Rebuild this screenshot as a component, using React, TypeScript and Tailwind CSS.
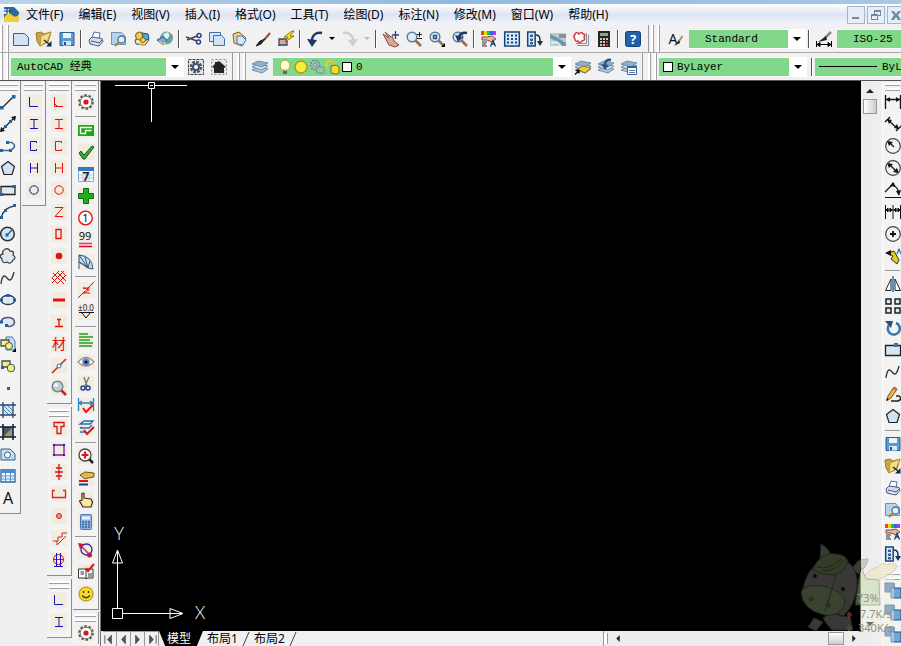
import type { ReactNode } from 'react';

const doc = <path d="M.5 2.500h11l4 4v8H.5z" fill="#cfe3f5" stroke="#35608c" />;

const folder = (
  <>
    <path d="M0 2l5-1 3 2 7-2-3 10-8 4-3-5z" fill="#c9a53f" stroke="#9a7a2c" />
    <path d="M5 5l10-4-4 10-7 4z" fill="#f6dc83" stroke="#b9993c" />
    <path d="M8 9l5 4" stroke="#12284f" strokeWidth="1.600" />
    <path d="M15.500 10v5.500H10z" fill="#12284f" />
  </>
);

const disk = (
  <>
    <path d="M1 1.500h14v13H1z" fill="#5b9bd2" stroke="#2b5f94" />
    <path d="M4 2h8v5H4z" fill="#eaf4fb" />
    <path d="M4 10h8v4.500H4z" fill="#d8e8f3" />
    <path d="M5 11h2v3H5z" fill="#24517f" />
  </>
);

const printer = (
  <>
    <path d="M4 7l2-6 6 1-1 6" fill="#fff" stroke="#5b6c9e" />
    <path d="M1 9l3-3 10 1.500 1 3-4 4.500-9-2z" fill="#d5d9ec" stroke="#4a5688" />
    <path d="M3 10l8 2 3-3" stroke="#4a5688" />
    <path d="M5 12l5 1.500" stroke="#fff" />
  </>
);

const preview = (
  <>
    <path d="M.5 1.500h10l4 4v8H.5z" fill="#b5d3ea" stroke="#6f94b6" />
    <circle cx="10.500" cy="8.500" r="3.500" fill="#e3f2fa" stroke="#4e7390" strokeWidth="1.300" />
    <path d="M8 11l-4 4" stroke="#a87b3c" strokeWidth="2" />
  </>
);

const props = (
  <>
    <path d="M0 2h4" stroke="#f33" strokeWidth="4" />
    <path d="M3 2h3" stroke="#e3e000" strokeWidth="4" />
    <path d="M6 2h3" stroke="#1c2" strokeWidth="4" />
    <path d="M9 2h3" stroke="#26f" strokeWidth="4" />
    <path d="M12 2h3" stroke="#d2d" strokeWidth="4" />
    <path d="M1 6h5l5-1 4 3-4 3-5-2H1z" fill="#eab79c" stroke="#7c4e42" />
    <path d="M1 11h5M1 13h4M1 15h5" stroke="#333" />
    <path d="M9.500 15.500l2.500-6 2.500 6M10.500 13h3.500" stroke="#1c3c74" strokeWidth="1.300" />
  </>
);

const toolPalette = (
  <>
    <path d="M.7 1h7.500v14H.7z" fill="#d8e8f5" stroke="#17467c" strokeWidth="1.500" />
    <path d="M3.500 4h2v1.500h-2zM3.500 8h2v1.500h-2zM3.500 11.500h2V13h-2z" stroke="#17467c" />
    <path d="M9 4c4 0 4 3 4 7" stroke="#17315a" strokeWidth="1.500" />
    <path d="M10 10h6l-3 5z" fill="#17315a" />
  </>
);

const polygon = <path d="M8 1.500l6.500 5-2.500 8H4l-2.500-8z" fill="#d3e2f0" stroke="#222" strokeWidth="1.200" />;
const spline = <path d="M1 14C2 6 4 4 7 8s5 2 7-6" stroke="#333" strokeWidth="1.300" />;

const order = (
  <>
    <path d="M0 0h9v9H0z" fill="#3f73b0" stroke="#234e82" />
    <path d="M6 5h10v10H6z" fill="#74a3d6" stroke="#234e82" />
  </>
);

const gear = (
  <>
    <circle cx="8" cy="8" r="6.800" stroke="#555" strokeWidth="2" strokeDasharray="2.500 1.800" />
    <circle cx="8" cy="8" r="5.800" fill="#fff" stroke="#777" />
    <circle cx="8" cy="8" r="2.600" fill="#e01414" />
  </>
);

const layers = (
  <>
    <path d="M0 11l6-3 10 2-6 4z" fill="#a9c7e2" stroke="#7390ad" />
    <path d="M0 8l6-3 10 2-6 4z" fill="#d3e3f0" stroke="#7390ad" />
    <path d="M0 5l6-3 10 2-6 4z" fill="#8dafcd" stroke="#7390ad" />
  </>
);

const magnifier = (
  <>
    <path d="M9 9l6 6" stroke="#9c6b46" strokeWidth="2.500" />
    <circle cx="6" cy="6" r="4.800" fill="#dcebf5" stroke="#5f7d99" strokeWidth="1.500" />
  </>
);

const angle = <path d="M3.500 3v9.500h8.500" />;
const beam = <path d="M4 3.500h8M4 12.500h8M8 3.500v9" />;
const channel = <path d="M10.500 5V3.500h-6v9h6V11" />;
const wide = <path d="M4.500 3v10M11.500 3v10M4.500 8h7" />;
const pipe = <circle cx="8" cy="8" r="4.200" />;

const icons: Record<string, ReactNode> = {
  doc,
  folder,
  disk,
  printer,
  preview,
  props,
  toolPalette,
  polygon,
  spline,
  order,
  gear,
  layers,
  publish: (
    <>
      <path d="M1 9l5-3 9 3-4 5-9-1z" fill="#e8e6d4" stroke="#3f4b7c" />
      <circle cx="5.500" cy="5" r="4" fill="#f3c944" stroke="#7a5a12" />
      <path d="M8 2l6 1 1 5-5 2z" fill="#5ba4d7" stroke="#274f7e" />
      <circle cx="9" cy="9" r="2.500" fill="#f7d64c" stroke="#7a5a12" />
      <path d="M5 13l6 1" stroke="#e8b315" strokeWidth="2" />
    </>
  ),
  globe: (
    <>
      <circle cx="9.500" cy="7" r="6" fill="#4ab2a5" stroke="#6e96b4" />
      <path d="M6 3l5-2 2 4-4 4z" fill="#d9f2f2" />
      <path d="M12 7l3-3" stroke="#d96a4a" strokeWidth="2" />
      <path d="M0 9l6-3 4 3-4 5z" fill="#7fa4e0" stroke="#314f98" />
      <path d="M2 10l4 3 3-2" stroke="#e9c83f" strokeWidth="1.500" />
    </>
  ),
  cut: (
    <>
      <path d="M0 6l11 4M1 9l10-4" stroke="#3b4658" strokeWidth="1.400" />
      <circle cx="13" cy="4.500" r="2" stroke="#2c3c84" strokeWidth="1.400" />
      <circle cx="12.500" cy="11" r="2" stroke="#2c3c84" strokeWidth="1.400" />
    </>
  ),
  copy: (
    <>
      <path d="M.5 1.500h11v9H.5z" fill="#d8e8f7" stroke="#3c6fae" />
      <path d="M4.500 4.500h8l3 3v7h-11z" fill="#cfe3f6" stroke="#3c6fae" />
    </>
  ),
  paste: (
    <>
      <path d="M1 3l6-2 7 6-4 8-8-3z" fill="#ecd38b" stroke="#7d6428" />
      <path d="M5 5h5l4 4-3 5-6-1z" fill="#d7e6f2" stroke="#52749c" />
    </>
  ),
  brush: (
    <>
      <path d="M15 2l-6 7" stroke="#8e4e34" strokeWidth="2" />
      <path d="M10 8l-4 5-5 2 4-5z" fill="#222" stroke="#222" />
    </>
  ),
  block: (
    <>
      <path d="M1 8h8v6H1z" fill="#f2a07f" stroke="#244a7e" strokeWidth="1.300" />
      <path d="M1 15l-1-1h3z" fill="#244a7e" />
      <path d="M14 0L6 6h4l-3 5 9-6h-4l4-5z" fill="#ffe11b" stroke="#6e5a00" strokeWidth=".8" />
    </>
  ),
  undo: (
    <>
      <path d="M15 2C9 1 5 4 5 10" stroke="#1c3768" strokeWidth="2.500" />
      <path d="M0 8l10 1-5 7z" fill="#1c3768" />
    </>
  ),
  redo: (
    <>
      <path d="M1 2c6-1 10 2 10 8" stroke="#cdd0c6" strokeWidth="2.500" />
      <path d="M16 8L6 9l5 7z" fill="#cdd0c6" />
    </>
  ),
  pan: (
    <>
      <path d="M0 3l6 4-4-6 6 5 1-1 2 5 5 4-4 2-6-2z" fill="#dba795" stroke="#8a4c44" />
      <path d="M12.500 0v8M9 4h7" stroke="#26467c" strokeWidth="1.300" />
    </>
  ),
  zoomPm: (
    <>
      {magnifier}
      <path d="M13.500 1v5M11 3.500h5M11 7.500h5" stroke="#222" />
    </>
  ),
  zoomWin: (
    <>
      {magnifier}
      <path d="M4.500 4.500h3v3h-3z" fill="#b8d7ef" stroke="#234e82" strokeWidth="1.300" />
      <path d="M16 12v4h-4z" fill="#000" />
    </>
  ),
  zoomPrev: (
    <>
      {magnifier}
      <path d="M15 2c-5-1-7 1-8 4" stroke="#1c3768" strokeWidth="2.500" />
      <path d="M3 4l8 2-5 5z" fill="#1c3768" />
    </>
  ),
  grid: (
    <>
      <path d="M.7 1h14.600v14H.7z" fill="#dcebf6" stroke="#17467c" strokeWidth="1.500" />
      <path d="M3 4.500h2M7 4.500h2M11 4.500h2M3 8h2M7 8h2M11 8h2M3 11.500h2M7 11.500h2M11 11.500h2" stroke="#17467c" strokeWidth="1.800" />
    </>
  ),
  sheet: (
    <>
      <path d="M0 2h16v13H0z" fill="#b9ccd6" />
      <path d="M0 3l8 4 8 5v3h-4L6 10 0 7z" fill="#6c95ae" />
      <path d="M9 3h7v4H9z" fill="#8195a0" />
      <path d="M1 12l6-1 4 4" stroke="#eef3f5" strokeWidth="1.500" />
    </>
  ),
  markup: (
    <>
      <path d="M4 14.500h11.500V4M3 12.500h10.500V2" stroke="#7e8ea0" />
      <path d="M2 3q2-3 4 0 3-3 4 0 3 0 1 3 2 3-2 4-3 3-4 0-3 1-3-2-2-2 0-5z" fill="#fff" stroke="#e0343c" strokeWidth="1.500" />
    </>
  ),
  calc: (
    <>
      <path d="M2 0h12v16H2z" fill="#2b2220" />
      <path d="M4 2h8v3H4z" fill="#7fae8e" />
      <path d="M4 8h2M7 8h2M10 8h2M4 11h2M7 11h2M4 14h2M7 14h2" stroke="#fff" strokeWidth="1.600" />
      <path d="M10 11h2M10 14h2" stroke="#e44" strokeWidth="1.600" />
    </>
  ),
  help: (
    <>
      <rect x=".5" y=".5" width="15" height="15" rx="2" fill="#2260a8" stroke="#133f77" />
      <text x="8" y="13" textAnchor="middle" fontSize="13" fontWeight="700" fill="#fff">?</text>
    </>
  ),
  textStyle: (
    <>
      <text x="6" y="13" textAnchor="middle" fontSize="14" fill="#111">A</text>
      <path d="M15.500 5l-4 6" stroke="#b98b4f" strokeWidth="2" />
      <path d="M12 9l-5 6 6-3z" fill="#222" />
    </>
  ),
  dimStyle: (
    <>
      <path d="M.5 10v6M15.500 10v6M1 13.500h14M1 13.500l3-2v4zM15 13.500l-3-2v4z" fill="#000" stroke="#000" />
      <path d="M15 1L9 7" stroke="#8a8a8a" strokeWidth="2.500" />
      <path d="M10 5l-8 6 9-2z" fill="#222" />
    </>
  ),
  workspace: (
    <>
      <path d="M.5.500h15v15H.5z" fill="#e4e6e8" stroke="#444" strokeDasharray="3 1" />
      <circle cx="8" cy="8" r="4.800" stroke="#41556b" strokeWidth="3" strokeDasharray="2.500 1.200" />
      <circle cx="8" cy="8" r="3" fill="#fff" stroke="#41556b" strokeWidth="2" />
    </>
  ),
  home: (
    <>
      <path d="M.5.500h15v15H.5z" fill="#e4e6e8" stroke="#888" strokeDasharray="2 2" />
      <path d="M1 8l3-3V3h2l2-1 7 6-2 1v5H3V9z" fill="#222" />
    </>
  ),
  layerCurrent: (
    <>
      {layers}
      <path d="M2 10l6-3 8 2-6 5z" fill="#e9ce3e" stroke="#86781b" />
      <path d="M0 15.500l4-4M1 11.500h3v3" stroke="#111" strokeWidth="1.300" />
    </>
  ),
  layerPrev: (
    <>
      {layers}
      <path d="M13 1C8 0 7 3 7 6" stroke="#2d547f" strokeWidth="2.500" />
      <path d="M3 5l8 1-4 5z" fill="#2d547f" />
    </>
  ),
  layerState: (
    <>
      {layers}
      <path d="M6.500 7.500h9v8h-9z" fill="#fff" stroke="#2f68a8" />
      <path d="M6 8h10" stroke="#2f68a8" strokeWidth="2" />
      <path d="M8 11.500h6M8 13.500h6" stroke="#678" />
    </>
  ),
  bulb: (
    <>
      <path d="M5 11C1 7 4 1 8 1s7 6 3 10z" fill="#fffbd0" stroke="#a9a24c" />
      <path d="M6 12h4v3H6z" fill="#666" />
    </>
  ),
  sun: <circle cx="8" cy="8" r="6" fill="#f8ee3c" stroke="#b09a1c" strokeWidth="1.500" />,
  freeze: (
    <>
      <circle cx="6" cy="6" r="4.500" fill="#a9cdb1" stroke="#74919f" strokeWidth="2" strokeDasharray="2 1" />
      <circle cx="6" cy="6" r="2" stroke="#74919f" />
      <path d="M8 8h7v6H8z" fill="#9cc7a6" stroke="#74919f" />
    </>
  ),
  lock: (
    <>
      <path d="M2 8V4q3-5 7 0v3" stroke="#e0cd35" strokeWidth="2" />
      <path d="M6 7l5-1 3 2v6l-3 1-5-1z" fill="#f2dc3a" stroke="#826f12" />
    </>
  ),
  line: (
    <>
      <path d="M2 14L14 2" stroke="#222" strokeWidth="1.300" />
      <path d="M0 12h3.500v3.500H0zM12 1h3.500v3.500H12z" fill="#1d66a6" />
    </>
  ),
  xline: (
    <>
      <path d="M1 15L15 1" stroke="#111" strokeWidth="1.300" />
      <path d="M0 16l1-5 4 4zM16 0l-1 5-4-4z" fill="#111" />
      <path d="M4 9h3v3H4zM9 4h3v3H9z" fill="#1d66a6" />
    </>
  ),
  pline: (
    <>
      <path d="M1 12.500h9q8-4 2-8H8" stroke="#3a6d9f" strokeWidth="1.500" />
      <path d="M0 11h3v3H0zM9 11h3v3H9zM6 3h3v3H6z" fill="#1d66a6" />
    </>
  ),
  rect: (
    <>
      <path d="M1 4.500h14v8H1z" fill="#dbe7f2" stroke="#222" strokeWidth="1.300" />
      <path d="M12.500 3h3.500v3h-3.500zM0 11h3.500v3H0z" fill="#1d66a6" />
    </>
  ),
  arc: (
    <>
      <path d="M1 14Q4 3 15 2" stroke="#333" strokeWidth="1.300" />
      <path d="M0 12h3v3H0zM4 5h3v3H4zM13 0h3v3h-3z" fill="#1d66a6" />
    </>
  ),
  circle: (
    <>
      <circle cx="7.500" cy="8" r="6.800" fill="#d3e4f2" stroke="#333" strokeWidth="1.500" />
      <path d="M7 9l5-5" stroke="#1d66a6" strokeWidth="1.500" />
      <path d="M5.500 7.500h3v3h-3z" fill="#1d66a6" />
    </>
  ),
  cloud: <path d="M4 2q4-3 6 1 5 0 3 4 4 3 0 5-2 5-6 2-5 2-5-3-4-4 1-5-1-3 1-4z" fill="#dfe8ef" stroke="#444" strokeWidth="1.300" />,
  ellipse: (
    <>
      <ellipse cx="8" cy="8" rx="7" ry="4.500" fill="#dbe7f2" stroke="#334" strokeWidth="1.300" />
      <path d="M0 6.500h3v3H0zM13 6.500h3v3h-3zM6.500 2h3v3h-3z" fill="#1d66a6" />
    </>
  ),
  ellipseArc: (
    <>
      <path d="M1 8C2 2 14 2 14.500 8c0 4-5 5-7 4" fill="#dbe7f2" stroke="#557" strokeWidth="1.500" />
      <path d="M5 10h3v3H5zM0 6.500h3v3H0z" fill="#1d66a6" />
    </>
  ),
  insert: (
    <>
      <path d="M6 1h6l3 4v9H6z" fill="#cadff2" stroke="#4775ac" />
      <path d="M1 4h8v6H1z" fill="#ffef62" stroke="#35536d" strokeWidth="1.300" />
      <circle cx="9" cy="10" r="3.500" fill="#f5f07e" stroke="#35536d" />
      <path d="M16 12v4h-4z" fill="#000" />
    </>
  ),
  makeBlock: (
    <>
      <path d="M2 3h8v6H2z" fill="#ffef62" stroke="#35536d" strokeWidth="1.300" />
      <circle cx="11" cy="10" r="3.800" fill="#f5f07e" stroke="#35536d" />
      <path d="M1 8h3v3H1z" fill="#1d66a6" />
    </>
  ),
  point: <path d="M7 7h3v3H7z" fill="#1d66a6" />,
  hatch: (
    <>
      <path d="M3 3h10v10H3z" fill="#d8e9f6" />
      <path d="M3 7l6 6M3 3l10 10M7 3l6 6" stroke="#3f77ad" />
      <path d="M3 0v16M13 0v16M0 3h16M0 13h16" stroke="#24476f" strokeWidth="1.300" />
    </>
  ),
  gradient: (
    <>
      <path d="M3 3h10v10H3z" fill="#4c5566" />
      <path d="M13 3v10H3z" fill="#999a75" />
      <path d="M3 0v16M13 0v16M0 3h16M0 13h16" stroke="#111c35" strokeWidth="1.500" />
    </>
  ),
  region: (
    <>
      <path d="M1 3h9l5 5v6H1z" fill="#c6dcf0" stroke="#2e5f93" />
      <circle cx="7.500" cy="9" r="3" fill="#fff" stroke="#2e5f93" />
    </>
  ),
  table: (
    <>
      <path d="M1 2h14v12H1z" fill="#eef5fb" stroke="#2b63a3" strokeWidth="1.300" />
      <path d="M1 3.500h14" stroke="#4e8dcb" strokeWidth="3" />
      <path d="M1 8h14M1 11h14M5.500 5v9M10.500 5v9" stroke="#5e8fc2" />
    </>
  ),
  mtext: <text x="8" y="14" textAnchor="middle" fontSize="16" fill="#111">A</text>,
  angleBlue: <g stroke="#1212b4">{angle}</g>,
  beamBlue: <g stroke="#1212b4">{beam}</g>,
  channelBlue: <g stroke="#1212b4">{channel}</g>,
  wideBlue: <g stroke="#1212b4">{wide}</g>,
  pipeBlue: <g stroke="#1212b4">{pipe}</g>,
  angleRed: (
    <g stroke="#e01010">
      {angle}
      <path d="M4 10l2 2" />
    </g>
  ),
  beamRed: <g stroke="#e01010">{beam}</g>,
  channelRed: <g stroke="#e01010">{channel}</g>,
  wideRed: <g stroke="#e01010">{wide}</g>,
  pipeRed: <g stroke="#e01010">{pipe}</g>,
  zed: <path d="M4 3.500h8l-8 9h8" stroke="#e01010" />,
  tube: <path d="M5 3.500h5v9H5z" stroke="#e01010" strokeWidth="1.300" />,
  dot: <circle cx="8" cy="8" r="3.300" fill="#e81010" />,
  mesh: <path d="M2 3l11 11M6 2l9 9M1 8l6 6M10 1l5 5M1 8l7-7M1 13L13 1M6 14l9-9" stroke="#d81414" />,
  bar: <path d="M2 8h12" stroke="#e01010" strokeWidth="3" />,
  bolt: <path d="M4 12.500h8M6 5.500h4M8 5.500v7" stroke="#d81414" strokeWidth="1.300" />,
  material: <text x="8" y="13" textAnchor="middle" fontSize="14" fill="#e01010">材</text>,
  node: (
    <>
      <path d="M1 15L15 1" stroke="#d02c20" strokeWidth="1.600" />
      <circle cx="8" cy="8" r="2" fill="#fff" stroke="#277494" />
    </>
  ),
  find: (
    <>
      <path d="M10 10l5 5" stroke="#b52b28" strokeWidth="2.500" />
      <circle cx="6.500" cy="6.500" r="5.300" fill="#b9cfcf" stroke="#71807e" strokeWidth="1.300" />
      <circle cx="5" cy="5" r="2" fill="#edf8f7" />
    </>
  ),
  tee: <path d="M3 2.500h10v4h-3v7H6v-7H3z" stroke="#d81414" strokeWidth="1.300" />,
  plate: (
    <>
      <path d="M3 3h10v10H3z" stroke="#8020a0" strokeWidth="1.300" />
      <path d="M2 2h2v2H2zM12 2h2v2h-2zM2 12h2v2H2zM12 12h2v2h-2z" fill="#2020b8" />
    </>
  ),
  stack: <path d="M8 0v16M5 4h6M4 8h8M5 12h6" stroke="#d81414" strokeWidth="1.300" />,
  bracket: <path d="M4 4.500H1.500v7h13v-7H12" stroke="#d02c20" strokeWidth="1.300" />,
  stud: <circle cx="8" cy="8" r="2.500" fill="#ef8c8c" stroke="#d02020" />,
  stair: <path d="M2 11h5V7h4V3h5M6 15l9-9M6 15v-4" stroke="#d02c20" />,
  weld: (
    <>
      <circle cx="7.500" cy="7.500" r="5" stroke="#d81414" />
      <path d="M2 7.500h11" stroke="#d81414" />
      <path d="M5.500 1v13M9.500 1v13M3 14.500h9" stroke="#1212b4" />
    </>
  ),
  spiral: (
    <>
      <path d="M0 3h16v11H0z" fill="#18a818" />
      <path d="M14 5.500H2.500v6h5v-3h6" stroke="#fff" strokeWidth="1.400" />
    </>
  ),
  tick: <path d="M1 9l2-2 3 4 8-9 2 1L7 15H5z" fill="#3fa43a" stroke="#156018" />,
  calendar: (
    <>
      <path d="M.5 1.500h15v14H.5z" fill="#f7faff" stroke="#8badcf" />
      <path d="M0 3h16" stroke="#357ac6" strokeWidth="4" />
      <path d="M1 9h14M1 12h14M5 5v10M11 5v10" stroke="#b7cde5" />
      <text x="8" y="15" textAnchor="middle" fontSize="12" fontWeight="700" fill="#222">7</text>
    </>
  ),
  plus: <path d="M5.500.500h5v5h5v5h-5v5h-5v-5h-5v-5h5z" fill="#1fae1c" stroke="#0b6e12" />,
  one: (
    <>
      <circle cx="7.500" cy="8" r="6.800" fill="#fff" stroke="#e01010" strokeWidth="1.300" />
      <text x="7.500" y="12" textAnchor="middle" fontSize="11" fill="#111">1</text>
    </>
  ),
  ninety: (
    <>
      <text x="7" y="8" textAnchor="middle" fontSize="11" fill="#111">99</text>
      <path d="M1 11.500h13" stroke="#d82cd8" strokeWidth="1.500" />
      <path d="M1 14.500h13" stroke="#e01010" strokeWidth="1.500" />
    </>
  ),
  fan: (
    <>
      <path d="M1 15V1q13 1 14 14l-5-1q-4-4-9-6" fill="#c9dff0" stroke="#2f5877" />
      <path d="M1 1l9 13M7 3l3 11M12 7l-2 7M1 8l9 6" stroke="#2f5877" />
    </>
  ),
  flash: (
    <>
      <path d="M0 16l7-7M9 7l7-7" stroke="#e01010" />
      <path d="M12 6H5l6 2-6 3h7" stroke="#e01010" />
    </>
  ),
  level: (
    <>
      <text x="8" y="7" textAnchor="middle" fontSize="8" fill="#222">±0.0</text>
      <path d="M1 8.500h15M4 9l4 5 4-5" stroke="#111" />
    </>
  ),
  list: <path d="M1 2h9M1 5h14M1 8h11M1 11h14M1 14h13" stroke="#20a020" strokeWidth="1.600" />,
  eye: (
    <>
      <path d="M0 8q8-9 16 0-8 8-16 0z" fill="#fff" stroke="#b18b7b" strokeWidth="1.300" />
      <circle cx="8" cy="8" r="3.800" fill="#5b88ca" />
      <circle cx="8" cy="8" r="1.600" fill="#111" />
    </>
  ),
  scissors: (
    <>
      <path d="M6 1l3 9M11 1L7 10" stroke="#777" strokeWidth="1.300" />
      <circle cx="5" cy="12" r="2" stroke="#22429c" strokeWidth="1.500" />
      <circle cx="10" cy="12" r="2" stroke="#22429c" strokeWidth="1.500" />
    </>
  ),
  dimCheck: (
    <>
      <path d="M.5 0v13M15.500 0v13M1 5h14M4 3L1 5l3 2M12 3l3 2-3 2" stroke="#2c84b8" strokeWidth="1.300" />
      <path d="M5 10l3 4 7-7" stroke="#e01414" strokeWidth="2" />
    </>
  ),
  layerCheck: (
    <>
      <path d="M2 4l4-3h9l-3 3zM2 8h9l3-3M2 12h6M2 8l2-1" fill="#e1effa" stroke="#2c6ca8" strokeWidth="1.300" />
      <path d="M6 10l3 4 7-7" stroke="#e01414" strokeWidth="2" />
    </>
  ),
  zoomPlus: (
    <>
      <path d="M10 10l5 5" stroke="#222" strokeWidth="2.500" />
      <circle cx="7" cy="7" r="6" fill="#fff" stroke="#444" strokeWidth="1.300" />
      <path d="M7 3.500v7M3.500 7h7" stroke="#e01414" strokeWidth="2.200" />
    </>
  ),
  handPen: (
    <>
      <path d="M2 5l5-3 9 1v4l-6 1-3 1z" fill="#e2b94c" stroke="#745718" />
      <path d="M1 11h9" stroke="#e01414" strokeWidth="2" />
      <path d="M1 14.500h9" stroke="#183c9c" strokeWidth="2" />
    </>
  ),
  hand: <path d="M4 8V1.500q2-1 2 0V6l7 1 1.500 3-1.500 5H5L1.500 9z" fill="#ffe6a5" stroke="#3d2b12" strokeWidth="1.200" />,
  calcBlue: (
    <>
      <rect x="2.500" y=".5" width="11" height="15" rx="1" fill="#91b6df" stroke="#4e78ab" />
      <path d="M4 2.500h8v3H4z" fill="#e7f2fc" />
      <path d="M4 8h2M7 8h2M10 8h2M4 10.500h2M7 10.500h2M10 10.500h2M4 13h2M7 13h2M10 13h2" stroke="#315f9c" strokeWidth="1.500" />
    </>
  ),
  swap: (
    <>
      <circle cx="8.500" cy="7.500" r="5.500" stroke="#2424a8" strokeWidth="1.300" />
      <path d="M4 5l7 7" stroke="#d01c44" strokeWidth="1.300" />
      <path d="M0 1l6 1-4 5z" fill="#c8144c" />
      <circle cx="11.500" cy="13" r="2.500" fill="#c8144c" />
    </>
  ),
  book: (
    <>
      <path d="M.5 5H7l1 1 1-1h6v9H9l-1 1-1-1H.5zM8 6v8M2.500 8H6M2.500 10H6M10 10h4M10 12h4" fill="#fff" stroke="#333" />
      <path d="M8 4l2 3 6-7" stroke="#e01414" strokeWidth="2" />
    </>
  ),
  smile: (
    <>
      <circle cx="8" cy="8" r="7" fill="#f4dc28" stroke="#a98c10" />
      <path d="M5.500 5v2M10.500 5v2M4 9.500q4 4.500 8 0" stroke="#332" strokeWidth="1.400" />
    </>
  ),
  dimLinear: (
    <>
      <path d="M.5 1v14M15.500 1v14M1 5.500h14" stroke="#111" strokeWidth="1.300" />
      <path d="M1 5.500l4-2.500v5zM15 5.500L11 3v5z" fill="#111" />
    </>
  ),
  dimAligned: (
    <>
      <path d="M0 6l5-5M11 15l5-5M3 4l10 9" stroke="#111" strokeWidth="1.300" />
      <path d="M2 3l5 1-3 4zM14 13l-5-1 3-4z" fill="#111" />
    </>
  ),
  dimRadius: (
    <>
      <circle cx="8" cy="8" r="7.300" stroke="#444" strokeWidth="1.200" />
      <path d="M9 9L4 4" stroke="#111" strokeWidth="1.300" />
      <path d="M2 3l6 1-4 4z" fill="#111" />
    </>
  ),
  dimDiameter: (
    <>
      <circle cx="8" cy="8" r="7.300" stroke="#444" strokeWidth="1.200" />
      <path d="M4 4l8 8" stroke="#111" strokeWidth="1.300" />
      <path d="M2 3l6 1-4 4zM14 13l-6-1 4-4z" fill="#111" />
    </>
  ),
  dimAngle: (
    <>
      <path d="M0 15.500h16M0 10l9-9M8 3q5 2 6 9" stroke="#111" strokeWidth="1.200" />
      <path d="M5 4l3-4 3 5zM11 9l3 5 2-6z" fill="#111" />
    </>
  ),
  dimContinue: (
    <>
      <path d="M.5 1v14M8 1v14M15.500 1v14M0 6h16" stroke="#111" />
      <path d="M1 6l2-2v4zM7 6L5 4v4zM9 6l2-2v4zM15 6l-2-2v4z" fill="#111" stroke="#111" />
    </>
  ),
  dimCenter: (
    <>
      <circle cx="8" cy="8" r="7.300" stroke="#444" strokeWidth="1.200" />
      <path d="M8 5v6M5 8h6" stroke="#111" strokeWidth="1.800" />
    </>
  ),
  dimEdit: (
    <>
      <path d="M3 5l6-2 5 9-2 4-6-5 2-3z" fill="#dfd11b" stroke="#333" />
      <path d="M0 5l6-3v6z" fill="#111" />
      <path d="M12 6l2-5 2 5" stroke="#236aa8" strokeWidth="1.200" />
    </>
  ),
  mirror: (
    <>
      <path d="M.5 14.500H6V3zM15.500 14.500H10V3z" fill="#fff" stroke="#222" />
      <path d="M8 0v16" stroke="#2371b4" strokeWidth="1.500" />
    </>
  ),
  array: <path d="M1 1h5v5H1zM10 1h5v5h-5zM1 10h5v5H1zM10 10h5v5h-5z" fill="#dfeaf4" stroke="#222" strokeWidth="1.500" />,
  rotate: (
    <>
      <path d="M4 5a6 6 0 1 0 7-2" stroke="#3c74aa" strokeWidth="2.500" />
      <path d="M0 1h8L6 8z" fill="#24517f" />
    </>
  ),
  stretch: (
    <>
      <path d="M.5 3.500h15v10H.5z" fill="#d8e5f0" stroke="#222" strokeWidth="1.300" />
      <path d="M9 1h4v4H9z" fill="#3c74aa" />
    </>
  ),
  pencil: (
    <>
      <path d="M6 15h7q5-2 1-5h-3" stroke="#222" strokeWidth="1.500" />
      <path d="M3 10l6-9 3 2-6 9-4 2z" fill="#f0ba48" stroke="#7b4b17" />
      <path d="M8 2l4 2" stroke="#d6695a" strokeWidth="2" />
      <path d="M1 15l1-3 2 2z" fill="#111" />
    </>
  ),
};

type Item = string | null;

const names = (s: string): Item[] => s.split(' ').map((n) => (n === '|' ? null : n));

const menus = ['文件(F)', '编辑(E)', '视图(V)', '插入(I)', '格式(O)', '工具(T)', '绘图(D)', '标注(N)', '修改(M)', '窗口(W)', '帮助(H)'];

function Icon({ name }: { name: string }) {
  return (
    <svg viewBox="0 0 16 16" fill="none" className="block h-4 w-4 shrink-0 overflow-visible" aria-hidden="true">
      {icons[name]}
    </svg>
  );
}

function Caret() {
  return (
    <svg viewBox="0 0 8 4" className="h-1 w-2" aria-hidden="true">
      <path d="M0 0h8L4 4z" fill="#000" />
    </svg>
  );
}

function HTool({ name }: { name: string }) {
  return (
    <button type="button" aria-label={name} className="flex h-6 w-[23px] shrink-0 items-center justify-center">
      <Icon name={name} />
    </button>
  );
}

function HGrip() {
  return (
    <div className="flex h-full shrink-0 gap-[3px]">
      <div className="w-[3px] border-r border-[#a0a0a0] bg-white" />
      <div className="w-[3px] border-r border-[#a0a0a0] bg-white" />
    </div>
  );
}

function HSep() {
  return <div className="mx-[2px] h-[18px] w-[2px] shrink-0 border-l border-[#555] bg-white" />;
}

function HTools({ items }: { items: Item[] }) {
  return <>{items.map((n, i) => (n ? <HTool key={i} name={n} /> : <HSep key={i} />))}</>;
}

function VBar({ items, tint = false, last = false }: { items: Item[]; tint?: boolean; last?: boolean }) {
  return (
    <div className={`flex flex-col border-r border-[#8c8c8c] bg-[#f3f3f3] ${last ? '' : 'border-b pb-1'}`}>
      <div className="flex h-[10px] flex-col gap-[2px] px-[2px] pt-[2px]">
        <div className="h-[3px] border-b border-[#a0a0a0] bg-white" />
        <div className="h-[3px] border-b border-[#a0a0a0] bg-white" />
      </div>
      {items.map((n, i) =>
        n ? (
          <button key={i} type="button" aria-label={n} className="flex h-[22px] items-center justify-center">
            <span className={tint ? 'bg-[#f2ece0]' : ''}>
              <Icon name={n} />
            </span>
          </button>
        ) : (
          <div key={i} className="flex h-[6px] items-center px-[2px]">
            <div className="h-px w-full bg-[#999]" />
          </div>
        ),
      )}
    </div>
  );
}

type ComboProps = { label: string; value: string; className: string; pad: string; children?: ReactNode };

function Combo({ label, value, className, pad, children }: ComboProps) {
  return (
    <div className={`relative flex h-5 shrink-0 items-center bg-white ${className}`}>
      <select
        aria-label={label}
        defaultValue={value}
        className={`mr-[18px] h-[18px] min-w-0 flex-1 appearance-none bg-[#80d888] font-['Liberation_Mono','Noto_Sans_CJK_SC',monospace] text-[11px] leading-[18px] text-black ${pad}`}
      >
        <option>{value}</option>
      </select>
      <div className="pointer-events-none absolute inset-y-0 left-1 flex items-center">{children}</div>
      <div className="pointer-events-none absolute inset-y-0 right-[5px] flex items-center">
        <Caret />
      </div>
    </div>
  );
}

function TitleBar() {
  return (
    <header className="shrink-0">
      <div className="h-1 bg-gradient-to-r from-[#b9d3ea] via-[#8fbbe0] to-[#a8c8e4]" />
      <div className="flex h-[21px] items-center bg-gradient-to-b from-white via-[#dfe4f3] to-[#f2f4fa]">
        <svg viewBox="0 0 16 16" className="ml-1 -mr-px h-4 w-4 shrink-0" aria-hidden="true">
          <path d="M0 0h10l5 5v10H0z" fill="#2b6c9e" />
          <path d="M0 11q4-7 8-3t7-1v8H0z" fill="#f3cf34" />
          <path d="M0 2h5v5H0z" fill="#d8ecf8" />
          <path d="M3 1v6M0 4h7" stroke="#133d68" />
        </svg>
        <nav className="flex gap-px">
          {menus.map((m) => (
            <button key={m} type="button" className="whitespace-nowrap px-[7px] text-[12px] leading-5 text-black">
              {m}
            </button>
          ))}
        </nav>
        <div className="ml-auto -mr-1 flex gap-[2px]">
          {['M4 10h7v2H4z', 'M6 3h7v6h-3v4H3V7h3zM7 5v2h3v1h2V5zM4 9v3h5V9z', 'M3 4h3l2 3 2-3h3l-3 4 3 5h-3l-2-3-2 3H3l3-5z'].map((d, i) => (
            <button
              key={d}
              type="button"
              aria-label={['Minimize', 'Restore', 'Close'][i]}
              className="flex h-[18px] w-[18px] items-center justify-center border border-[#9fb6d0] bg-[#e6eef8]"
            >
              <svg viewBox="0 0 16 16" className="h-4 w-4" aria-hidden="true">
                <path d={d} fill="#7587a2" fillRule="evenodd" />
              </svg>
            </button>
          ))}
        </div>
      </div>
    </header>
  );
}

function Toolbars() {
  return (
    <div className="shrink-0 border-b border-[#555] bg-[#f1f1f1]">
      <div className="flex h-7 items-center overflow-hidden border-b border-[#a8a8a8]">
        <HGrip />
        <HTools items={names('doc folder disk | printer preview publish globe | cut copy paste brush block | undo')} />
        <button type="button" aria-label="undo list" className="flex h-6 w-3 shrink-0 items-center justify-center">
          <svg viewBox="0 0 6 3" className="h-[3px] w-[6px]"><path d="M0 0h6L3 3z" fill="#000" /></svg>
        </button>
        <HTool name="redo" />
        <button type="button" aria-label="redo list" className="flex h-6 w-3 shrink-0 items-center justify-center">
          <svg viewBox="0 0 6 3" className="h-[3px] w-[6px]"><path d="M0 0h6L3 3z" fill="#bbb" /></svg>
        </button>
        <HSep />
        <HTools items={names('pan zoomPm zoomWin zoomPrev | props grid toolPalette sheet markup calc | help')} />
        <div className="ml-1 mr-[2px] h-full w-px shrink-0 bg-[#999]" />
        <HGrip />
        <div className="w-[3px] shrink-0" />
        <HTool name="textStyle" />
        <Combo label="Text style" value="Standard" className="ml-[3px] w-[117px]" pad="pl-4" />
        <HSep />
        <HTool name="dimStyle" />
        <Combo label="Dimension style" value="ISO-25" className="ml-[2px] w-[118px]" pad="pl-4" />
      </div>
      <div className="flex h-[27px] items-center overflow-hidden">
        <HGrip />
        <Combo label="Workspace" value="AutoCAD 经典" className="ml-[2px] w-[173px]" pad="pl-[6px]" />
        <HTools items={names('workspace home')} />
        <div className="ml-[2px] mr-1 h-full w-px shrink-0 bg-[#999]" />
        <HGrip />
        <div className="w-[2px] shrink-0" />
        <HTool name="layers" />
        <Combo label="Layer" value="0" className="ml-[2px] w-[298px]" pad="pl-[83px]">
          {['bulb', 'sun', 'freeze', 'lock'].map((n) => (
            <Icon key={n} name={n} />
          ))}
          <span className="ml-px h-[10px] w-[10px] border border-black bg-white" />
        </Combo>
        <HTools items={names('layerCurrent layerPrev layerState')} />
        <div className="ml-[2px] mr-[5px] h-full w-px shrink-0 bg-[#999]" />
        <HGrip />
        <Combo label="Colour" value="ByLayer" className="ml-[2px] w-[148px]" pad="pl-[18px]">
          <span className="h-[10px] w-[10px] border border-black bg-white" />
        </Combo>
        <div className="w-[2px] shrink-0" />
        <HSep />
        <Combo label="Linetype" value="ByLayer" className="w-[148px]" pad="pl-[67px]">
          <span className="h-px w-[58px] bg-black" />
        </Combo>
      </div>
    </div>
  );
}

function Canvas() {
  return (
    <div className="relative min-h-0 flex-1 overflow-hidden bg-black">
      <svg viewBox="0 0 74 42" fill="none" className="absolute left-[14px] top-0 h-[42px] w-[74px]" aria-hidden="true">
        <path d="M0 4.500h33M40 4.500h32M36.500 8v33M33.500 1.500h6v6h-6zM35 4.500h3" stroke="#fff" />
      </svg>
      <svg viewBox="0 0 110 114" fill="none" className="absolute bottom-[10px] left-2 h-[114px] w-[110px]" aria-hidden="true">
        <path d="M3.500 101.500h10v10h-10zM8.500 101V54M14 106.500h47" stroke="#fff" />
        <path d="M8.500 43l-5 13h10zM8.500 43v13M74 106.500l-13-5v10zM61 106.500h13" stroke="#fff" />
        <text x="10" y="33" textAnchor="middle" fontSize="17" fontWeight="300" className="fill-white font-[Lato,sans-serif]">Y</text>
        <text x="91" y="112" textAnchor="middle" fontSize="17" fontWeight="300" className="fill-white font-[Lato,sans-serif]">X</text>
      </svg>
    </div>
  );
}

function Slash() {
  return (
    <svg viewBox="0 0 8 15" fill="none" className="h-[15px] w-2 shrink-0" aria-hidden="true">
      <path d="M1 15L7 1" stroke="#444" />
    </svg>
  );
}

function LayoutTabs() {
  return (
    <div className="flex h-[15px] shrink-0 bg-[#f0f0f0]">
      {['M2 3v9M9 3L5 7.500 9 12z', 'M9 3L5 7.500 9 12z', 'M5 3l4 4.500L5 12z', 'M12 3v9M5 3l4 4.500L5 12z'].map((d, i) => (
        <button
          key={d}
          type="button"
          aria-label={['First', 'Previous', 'Next', 'Last'][i]}
          className="flex w-[14px] items-center justify-center border-r border-t border-[#999] first:ml-[2px]"
        >
          <svg viewBox="0 0 14 15" className="h-[15px] w-[14px]" aria-hidden="true">
            <path d={d} fill="#555" stroke="#555" />
          </svg>
        </button>
      ))}
      <button type="button" className="bg-black pl-2 pr-3 text-[12px] leading-[15px] text-white [clip-path:polygon(0_0,100%_0,86%_100%,14%_100%)]">
        模型
      </button>
      <button type="button" className="px-1 text-[12px] leading-[15px] text-black">布局1</button>
      <Slash />
      <button type="button" className="px-1 text-[12px] leading-[15px] text-black">布局2</button>
      <Slash />
      <div className="ml-auto flex w-[34%] items-center border-l border-[#999] bg-[#ececec]">
        <div className="h-[11px] w-1 border-r border-[#999] bg-white" />
        <svg viewBox="0 0 4 8" className="ml-2 h-[7px] w-1"><path d="M4 0v8L0 4z" fill="#222" /></svg>
        <div className="ml-auto h-[13px] w-4 border border-[#999] bg-gradient-to-b from-white to-[#ccc]" />
        <svg viewBox="0 0 4 8" className="ml-2 mr-[5px] h-[7px] w-1"><path d="M0 0v8l4-4z" fill="#222" /></svg>
      </div>
    </div>
  );
}

function Mascot() {
  return (
    <svg viewBox="0 0 101 106" fill="none" className="pointer-events-none absolute bottom-0 right-0 h-[106px] w-[101px]" aria-hidden="true">
      <path d="M60 32h34v74H78V90H60z" fill="#f3f0e2" opacity=".45" />
      <g opacity=".4" stroke="#50604a">
        <path d="M65 36q5-8 13-9 5-6 9-2 8-3 10 1-2 6-8 8-6 6-16 5-8 1-8-3z" fill="#eadfae" stroke="#b9a469" />
        <path d="M14 78l-6 9 8 4 7-9zM33 72q8 6 17 4l3 14H32q-6-6-9-12z" fill="#928d8a" />
        <path d="M20 21l1-17q8 4 10 12zM52 28l7-8 9-1q-1 8-10 15z" fill="#8a9a78" />
        <path d="M15 25Q28 9 45 20q14 9 12 26-2 20-14 30L2 57q1-20 13-32z" fill="#928d8a" />
        <path d="M13 30Q20 11 36 14q8 0 12 7-4 12-14 14-12 0-21-5z" fill="#7d9663" />
        <path d="M17 27q13 4 25-9M22 31q14 0 22-11" />
        <path d="M1 52q3-8 22-6 22 5 22 17-4 14-20 12Q2 70 1 52z" fill="#8ea877" />
        <path d="M36 35L25 72" />
        <circle cx="15" cy="36" r="2" fill="#111" />
        <circle cx="43" cy="49" r="2" fill="#111" />
        <circle cx="11" cy="59" r="2" fill="#73845e" />
        <circle cx="28" cy="65" r="2" fill="#73845e" />
        <path d="M58 44l3-17 5 12 13 1 1 25H55z" fill="#b8d59f" />
      </g>
      <path d="M49 80v-7M47 75l2-3 3 3z" stroke="#8a3431" />
      <path d="M49 84v7M47 88l2 3 3-3z" stroke="#46632d" />
      <g fontSize="11" className="fill-[#8b9388]">
        <text x="57" y="62">73%</text>
        <text x="60" y="78">7.7K/s</text>
        <text x="58" y="92">340K/s</text>
      </g>
    </svg>
  );
}

export default function App() {
  return (
    <div className="relative flex h-screen flex-col overflow-hidden bg-[#efefef] font-['Noto_Sans','Noto_Sans_CJK_SC',sans-serif]">
      <TitleBar />
      <Toolbars />
      <div className="flex min-h-0 flex-1 overflow-hidden">
        <aside className="flex shrink-0 items-start gap-px">
          <div className="-ml-1 w-[25px]">
            <VBar items={names('line xline pline polygon rect arc circle cloud spline ellipse ellipseArc insert makeBlock point hatch gradient region table mtext')} />
          </div>
          <div className="w-6">
            <VBar tint items={names('angleBlue beamBlue channelBlue wideBlue pipeBlue')} />
          </div>
          <div className="flex w-[25px] flex-col gap-[3px]">
            <VBar tint items={names('angleRed beamRed channelRed wideRed pipeRed zed tube dot mesh bar bolt material node find')} />
            <VBar tint items={names('tee plate stack bracket stud stair weld')} />
            <VBar tint items={names('angleBlue beamBlue')} />
          </div>
          <div className="flex w-[26px] flex-col gap-[2px]">
            <VBar
              tint
              items={names('gear | spiral tick calendar plus one ninety fan | flash level | list eye scissors dimCheck layerCheck | zoomPlus handPen hand calcBlue | swap book smile')}
            />
            <VBar tint last items={['gear']} />
          </div>
        </aside>
        <main className="ml-px flex min-w-0 flex-1 flex-col border-l border-[#777]">
          <Canvas />
          <LayoutTabs />
        </main>
        <div className="flex w-[17px] shrink-0 flex-col items-center bg-[#ededed] pb-5">
          <svg viewBox="0 0 8 4" className="mt-2 h-1 w-2"><path d="M4 0l4 4H0z" fill="#222" /></svg>
          <div className="mt-[6px] h-[15px] w-[14px] border border-[#999] bg-gradient-to-r from-white to-[#ccc]" />
          <div className="mt-auto"><Caret /></div>
        </div>
        <aside className="ml-1 flex w-[19px] shrink-0 flex-col border-l border-white">
          <div className="flex w-[20px] flex-col gap-[5px]">
            <VBar
              last
              items={names('dimLinear dimAligned dimRadius dimDiameter dimAngle dimContinue dimCenter dimEdit | mirror array rotate stretch spline pencil polygon | disk folder printer preview props toolPalette')}
            />
            <VBar last items={names('order order order')} />
          </div>
        </aside>
      </div>
      <Mascot />
    </div>
  );
}
